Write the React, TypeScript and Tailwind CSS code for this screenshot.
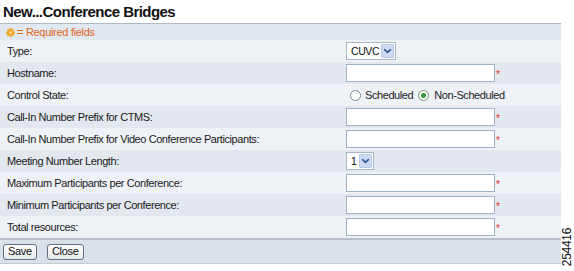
import React from "react";

type Row = {
  label: string;
  kind: "select" | "input" | "radio";
  value?: string;
  w?: number;
  req?: boolean;
};

const rows: Row[] = [
  { label: "Type:", kind: "select", value: "CUVC", w: 50 },
  { label: "Hostname:", kind: "input", req: true },
  { label: "Control State:", kind: "radio" },
  { label: "Call-In Number Prefix for CTMS:", kind: "input", req: true },
  { label: "Call-In Number Prefix for Video Conference Participants:", kind: "input", req: true },
  { label: "Meeting Number Length:", kind: "select", value: "1", w: 28 },
  { label: "Maximum Participants per Conference:", kind: "input", req: true },
  { label: "Minimum Participants per Conference:", kind: "input", req: true },
  { label: "Total resources:", kind: "input", req: true },
];

function Chevron() {
  return (
    <svg width="9" height="6" viewBox="0 0 9 6">
      <path d="M1.2 1.2 L4.5 4.4 L7.8 1.2" fill="none" stroke="#2a4f8f" strokeWidth="1.6" />
    </svg>
  );
}

function SelectBox({ value, w }: { value: string; w: number }) {
  return (
    <div
      className="flex h-[18px] items-center justify-between border border-[#a7b6c9] bg-white pl-[4px] pr-[1px]"
      style={{ width: w }}
    >
      <span className="text-[10.5px] leading-none tracking-[-0.4px] text-[#111]">{value}</span>
      <span className="flex h-[14px] w-[13px] items-center justify-center rounded-[1px] border border-[#b8c9e6] bg-[#cbd9f2]">
        <Chevron />
      </span>
    </div>
  );
}

function Radio({ checked }: { checked?: boolean }) {
  return (
    <span
      className={
        "flex h-[11px] w-[11px] items-center justify-center rounded-full border bg-white " +
        (checked ? "border-[#6f8f6f]" : "border-[#7d8794]")
      }
    >
      {checked && <span className="h-[5px] w-[5px] rounded-full bg-[#2f9a2f]" />}
    </span>
  );
}

function Gear() {
  return (
    <svg width="9" height="9" viewBox="0 0 10 10">
      <g fill="#f2a21a">
        <rect x="4" y="0" width="2" height="10" />
        <rect x="0" y="4" width="10" height="2" />
        <rect x="4" y="0" width="2" height="10" transform="rotate(45 5 5)" />
        <rect x="4" y="0" width="2" height="10" transform="rotate(-45 5 5)" />
        <circle cx="5" cy="5" r="3.4" />
      </g>
      <circle cx="5" cy="5" r="1.4" fill="#fde7b0" />
    </svg>
  );
}

function Btn({ children }: { children: React.ReactNode }) {
  return (
    <button className="h-[16px] rounded-[3px] border border-[#5f7083] bg-gradient-to-b from-white to-[#e6e8eb] px-[4px] text-[11px] leading-none tracking-[-0.3px] text-[#111]">
      {children}
    </button>
  );
}

export default function App() {
  return (
    <div
      className="relative h-[271px] w-[574px] overflow-hidden bg-white"
      style={{ fontFamily: '"Liberation Sans", Arial, sans-serif' }}
    >
      <div className="w-[561px]">
        <div className="h-[23px] pl-[3px] text-[15px] font-bold leading-[23px] tracking-[-0.55px] text-[#111]">
          New...Conference Bridges
        </div>
        <div className="h-[1px] bg-[#aeb9c6]" />
        <div className="flex h-[16px] items-center gap-[2px] bg-[#e2e8f0] pl-[6px] text-[11px] tracking-[-0.3px] text-[#e0641e]">
          <Gear />
          <span>= Required fields</span>
        </div>
        {rows.map((r, i) => (
          <div
            key={r.label}
            className={
              "flex h-[22px] items-center text-[11px] tracking-[-0.42px] text-[#1a1a1a] " +
              (i % 2 === 0 ? "bg-[#eef2f7]" : "bg-[#e3e8ef]")
            }
          >
            <div className="w-[346px] pl-[7px]">{r.label}</div>
            <div className="flex items-center">
              {r.kind === "select" && <SelectBox value={r.value!} w={r.w!} />}
              {r.kind === "input" && (
                <>
                  <div className="h-[18px] w-[149px] border border-[#9fb1c6] bg-white" />
                  {r.req && (
                    <span className="ml-[1px] mt-[3px] text-[10px] leading-none text-[#e02a2a]">*</span>
                  )}
                </>
              )}
              {r.kind === "radio" && (
                <div className="flex items-center pl-[4px]">
                  <Radio />
                  <span className="ml-[4px]">Scheduled</span>
                  <span className="ml-[5px]">
                    <Radio checked />
                  </span>
                  <span className="ml-[5px]">Non-Scheduled</span>
                </div>
              )}
            </div>
          </div>
        ))}
        <div className="h-[2px] bg-[#b7c0ca]" />
        <div className="flex h-[23px] items-center gap-[10px] bg-[#dbe1e8] pl-[3px]">
          <Btn>Save</Btn>
          <Btn>Close</Btn>
        </div>
        <div className="h-[1px] bg-[#c3cad2]" />
      </div>
      <div className="absolute left-[547px] top-[241px] w-[40px] -rotate-90 text-center text-[12px] leading-none tracking-[-0.3px] text-[#111]">
        254416
      </div>
    </div>
  );
}
